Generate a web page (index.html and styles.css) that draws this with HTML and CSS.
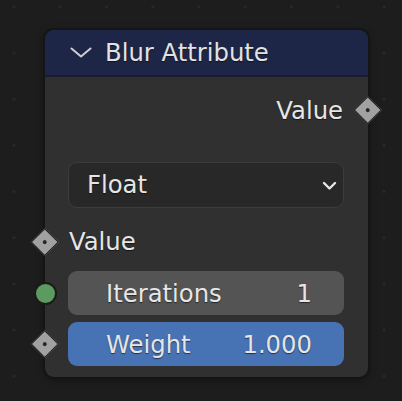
FILE: index.html
```html
<!DOCTYPE html>
<html>
<head>
<meta charset="utf-8">
<link rel="stylesheet" href="styles.css">
</head>
<body>
<div class="canvas">
  <div class="node">
    <div class="header">
      <svg class="hchev" width="22" height="11" viewBox="0 0 22 11"><path d="M1.5 1.5 L11 9.5 L20.5 1.5" fill="none" stroke="#cfcfcf" stroke-width="2" stroke-linecap="round" stroke-linejoin="round"/></svg>
      <span class="title">Blur Attribute</span>
    </div>
    <div class="content">
      <div class="row out">
        <span class="label">Value</span>
        <span class="sock diamond right"></span>
      </div>
      <div class="dropdown">
        <span class="label">Float</span>
        <svg class="dchev" width="15" height="10" viewBox="0 0 15 10"><path d="M2 2 L7.5 7.5 L13 2" fill="none" stroke="#e6e6e6" stroke-width="2.4" stroke-linecap="round" stroke-linejoin="round"/></svg>
      </div>
      <div class="row in">
        <span class="sock diamond left"></span>
        <span class="label">Value</span>
      </div>
      <div class="row field gray">
        <span class="sock circle left"></span>
        <span class="label">Iterations</span>
        <span class="label">1</span>
      </div>
      <div class="row field blue">
        <span class="sock diamond left"></span>
        <span class="label">Weight</span>
        <span class="label">1.000</span>
      </div>
    </div>
  </div>
</div>
</body>
</html>
```
FILE: styles.css
```css
html, body {
  margin: 0;
  padding: 0;
}
body {
  width: 402px;
  height: 401px;
  overflow: hidden;
  background-color: #1d1d1d;
  background-image: radial-gradient(circle, #2c2c2c 0.9px, rgba(44,44,44,0) 1.6px);
  background-size: 46.25px 46.15px;
  background-position: -9.1px -16.1px;
  font-family: "DejaVu Sans", sans-serif;
  color: #e6e6e6;
}
.canvas {
  padding: 30px 0 0 45px;
}
.node {
  position: relative;
  width: 323px;
  border-radius: 9px;
  background: #303030;
  box-shadow: 0 0 0 2px #151515, 0 2px 8px rgba(0,0,0,0.45);
}
.header {
  height: 45px;
  background: #1e2647;
  border-bottom: 2px solid #181c2d;
  border-radius: 9px 9px 0 0;
  display: flex;
  align-items: center;
  padding-left: 25px;
  font-size: 24.3px;
  line-height: 45px;
  color: #e2e2e2;
}
.hchev {
  margin-right: 13px;
  margin-top: -1px;
}
.title {
  text-shadow: 0 1px 1px rgba(0,0,0,0.5);
}
.content {
  padding: 11px 24px 11px 23px;
}
.label {
  font-size: 24.3px;
  text-shadow: 0 1px 1px rgba(0,0,0,0.55);
  white-space: nowrap;
}
.row {
  position: relative;
  height: 44px;
  line-height: 44px;
  display: flex;
  align-items: center;
}
.row.out {
  justify-content: flex-end;
  padding-right: 1px;
}
.row.out .label {
  padding-top: 1px;
}
.dropdown {
  margin-top: 30px;
  height: 44px;
  line-height: 44px;
  border: 1px solid #3c3c3c;
  border-radius: 9px;
  background: #282828;
  display: flex;
  align-items: center;
  justify-content: space-between;
  padding: 0 6px 0 18px;
}
.dchev {
  margin-top: 2px;
}
.row.in {
  margin-top: 12px;
  padding-left: 1px;
}
.field {
  margin-top: 7px;
  border-radius: 9px;
  justify-content: space-between;
  padding: 0 32px 0 38px;
}
.field .label {
  line-height: 44px;
  padding-top: 2px;
}
.gray {
  background: #545454;
}
.blue {
  background: #4772b3;
}
.sock {
  position: absolute;
  top: 50%;
  box-sizing: border-box;
}
.diamond {
  width: 19.5px;
  height: 19.5px;
  margin-top: -9.75px;
  background: #a1a1a1;
  border: 1.6px solid #1b1b1b;
  transform: rotate(45deg);
}
.diamond::after {
  content: "";
  position: absolute;
  left: 50%;
  top: 50%;
  width: 4.5px;
  height: 4.5px;
  margin: -2.25px 0 0 -2.25px;
  border-radius: 50%;
  background: #262626;
}
.diamond.right {
  right: -33.75px;
}
.diamond.left {
  left: -32.75px;
}
.circle {
  width: 23px;
  height: 23px;
  margin-top: -11.5px;
  left: -34.5px;
  border-radius: 50%;
  background: #5c9a60;
  border: 2px solid #1b1b1b;
}
```
